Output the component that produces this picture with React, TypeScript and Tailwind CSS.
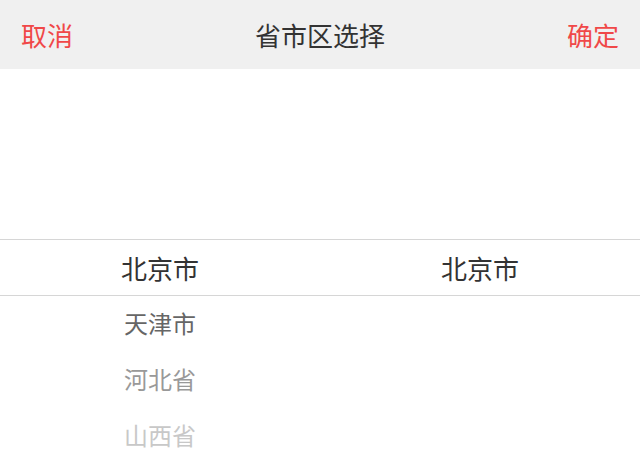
const left = ['北京市', '天津市', '河北省', '山西省'];
const right = ['北京市'];

const tones = ['text-[#333333]', 'text-[#666666]', 'text-[#999999]', 'text-[#c8c8c8]'];

function Column({ items }: { items: string[] }) {
  return (
    <div className="flex flex-1 flex-col">
      {items.map((item, i) => (
        <div
          key={item + i}
          className={`flex h-[56px] items-center justify-center ${i === 0 ? 'text-[26px]' : 'text-[24px]'} ${tones[i]}`}
        >
          {item}
        </div>
      ))}
    </div>
  );
}

export default function App() {
  return (
    <div
      className="h-[459px] w-[640px] overflow-hidden bg-white"
      style={{ fontFamily: '"Noto Sans CJK SC", "Noto Sans", sans-serif' }}
    >
      <header className="flex h-[69px] items-center justify-between bg-[#f0f0f0] px-[21px]">
        <button className="text-[26px] leading-none text-[#f04848]">取消</button>
        <h1 className="text-[26px] leading-none text-[#333333]">省市区选择</h1>
        <button className="text-[26px] leading-none text-[#f04848]">确定</button>
      </header>
      <div className="relative">
        <div className="h-[170px]" />
        <div className="pointer-events-none absolute left-0 right-0 top-[170px] h-[57px] border-y border-[#d6d6d6]" />
        <div className="flex">
          <Column items={left} />
          <Column items={right} />
        </div>
      </div>
    </div>
  );
}
